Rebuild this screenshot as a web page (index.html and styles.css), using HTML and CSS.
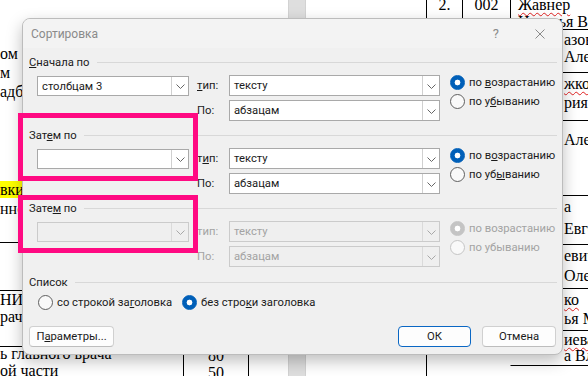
FILE: index.html
```html
<!DOCTYPE html>
<html>
<head>
    <title>Сортировка</title>
    <link rel="stylesheet" href="styles.css">
</head>
<body>
<div class="screen">
    <div class="desk">
        <div class="page page-left">
            <div class="lines lines-top">
                <p>ом</p>
                <p>м</p>
                <p>адб</p>
            </div>
            <div class="lines lines-mid">
                <p><mark>вки</mark></p>
                <p>нно</p>
            </div>
            <div class="lines lines-low">
                <p>НИЯ</p>
                <p>рач</p>
            </div>
            <div class="cells">
                <div class="cell">ь главного врача<br>ой части</div>
                <div class="cell cell-num">80<br>50</div>
                <div class="cell cell-rest"></div>
            </div>
        </div>
        <div class="page-gap"></div>
        <div class="page page-right">
            <div class="trow r0">
                <div class="c"></div>
                <div class="c c-num">2.</div>
                <div class="c c-num">002</div>
                <div class="c c-name"><span class="typo">Жавнер</span><br>Наталья В</div>
            </div>
            <div class="trow r1">
                <div class="c"></div><div class="c"></div><div class="c"></div>
                <div class="c c-name c-tail">азова<br>Алексеевна</div>
            </div>
            <div class="trow r2">
                <div class="c"></div><div class="c"></div><div class="c"></div>
                <div class="c c-name c-tail"><span class="typo">жкова</span><br>рия Андреевна</div>
            </div>
            <div class="trow r3">
                <div class="c"></div><div class="c"></div><div class="c"></div>
                <div class="c c-name c-tail">Алексеевна</div>
            </div>
            <div class="trow r4">
                <div class="c"></div><div class="c"></div><div class="c"></div>
                <div class="c c-name c-tail">а<br>Евгеньевна</div>
            </div>
            <div class="trow r5">
                <div class="c"></div><div class="c"></div><div class="c"></div>
                <div class="c c-name c-tail">евич<br>Олеговна</div>
            </div>
            <div class="trow r6">
                <div class="c"></div><div class="c"></div><div class="c"></div>
                <div class="c c-name c-tail"><span class="typo">ко</span><br>ья Михайловна</div>
            </div>
            <div class="trow r7 row-end">
                <div class="c"></div><div class="c"></div><div class="c"></div>
                <div class="c c-name c-tail"><span class="typo">иева</span><br>а Владимировна</div>
            </div>
            <div class="trow r8 row-end">
                <div class="c"></div><div class="c"></div><div class="c"></div>
                <div class="c c-name c-last"></div>
            </div>
        </div>
    </div>

    <div class="dialog">
        <div class="titlebar">
            <span class="title">Сортировка</span>
            <span class="help">?</span>
            <svg class="close" width="10" height="10" viewBox="0 0 10 10">
                <path d="M0.5 0.5 L9.5 9.5 M9.5 0.5 L0.5 9.5" stroke="#8a8a8a" stroke-width="1" fill="none"/>
            </svg>
        </div>

        <div class="dialog-body">
            <div class="group">
                <div class="group-head"><span><u>С</u>начала по</span></div>
                <div class="group-body">
                    <div class="combo key">
                        <span class="combo-text">столбцам 3</span>
                        <span class="drop"><svg width="9" height="5" viewBox="0 0 9 5"><path d="M0.5 0.5 L4.5 4.5 L8.5 0.5" fill="none" stroke="#666"/></svg></span>
                    </div>
                    <div class="fields">
                        <div class="field-row">
                            <span class="field-label"><u>т</u>ип:</span>
                            <div class="combo field">
                                <span class="combo-text">тексту</span>
                                <span class="drop"><svg width="9" height="5" viewBox="0 0 9 5"><path d="M0.5 0.5 L4.5 4.5 L8.5 0.5" fill="none" stroke="#666"/></svg></span>
                            </div>
                        </div>
                        <div class="field-row">
                            <span class="field-label">По:</span>
                            <div class="combo field">
                                <span class="combo-text">абзацам</span>
                                <span class="drop"><svg width="9" height="5" viewBox="0 0 9 5"><path d="M0.5 0.5 L4.5 4.5 L8.5 0.5" fill="none" stroke="#666"/></svg></span>
                            </div>
                        </div>
                    </div>
                    <div class="order">
                        <div class="radio checked"><span>по <u>в</u>озрастанию</span></div>
                        <div class="radio"><span>по у<u>б</u>ыванию</span></div>
                    </div>
                </div>
            </div>

            <div class="group">
                <div class="group-head"><span>Зат<u>е</u>м по</span></div>
                <div class="group-body">
                    <div class="combo key">
                        <span class="combo-text"></span>
                        <span class="drop"><svg width="9" height="5" viewBox="0 0 9 5"><path d="M0.5 0.5 L4.5 4.5 L8.5 0.5" fill="none" stroke="#666"/></svg></span>
                    </div>
                    <div class="fields">
                        <div class="field-row">
                            <span class="field-label">т<u>и</u>п:</span>
                            <div class="combo field">
                                <span class="combo-text">тексту</span>
                                <span class="drop"><svg width="9" height="5" viewBox="0 0 9 5"><path d="M0.5 0.5 L4.5 4.5 L8.5 0.5" fill="none" stroke="#666"/></svg></span>
                            </div>
                        </div>
                        <div class="field-row">
                            <span class="field-label">По:</span>
                            <div class="combo field">
                                <span class="combo-text">абзацам</span>
                                <span class="drop"><svg width="9" height="5" viewBox="0 0 9 5"><path d="M0.5 0.5 L4.5 4.5 L8.5 0.5" fill="none" stroke="#666"/></svg></span>
                            </div>
                        </div>
                    </div>
                    <div class="order">
                        <div class="radio checked"><span>по в<u>о</u>зрастанию</span></div>
                        <div class="radio"><span>по уб<u>ы</u>ванию</span></div>
                    </div>
                </div>
            </div>

            <div class="group group-off">
                <div class="group-head"><span>Зате<u>м</u> по</span></div>
                <div class="group-body">
                    <div class="combo key">
                        <span class="combo-text"></span>
                        <span class="drop"><svg width="9" height="5" viewBox="0 0 9 5"><path d="M0.5 0.5 L4.5 4.5 L8.5 0.5" fill="none" stroke="#a8a8a8"/></svg></span>
                    </div>
                    <div class="fields">
                        <div class="field-row">
                            <span class="field-label">тип:</span>
                            <div class="combo field">
                                <span class="combo-text">тексту</span>
                                <span class="drop"><svg width="9" height="5" viewBox="0 0 9 5"><path d="M0.5 0.5 L4.5 4.5 L8.5 0.5" fill="none" stroke="#a8a8a8"/></svg></span>
                            </div>
                        </div>
                        <div class="field-row">
                            <span class="field-label">По:</span>
                            <div class="combo field">
                                <span class="combo-text">абзацам</span>
                                <span class="drop"><svg width="9" height="5" viewBox="0 0 9 5"><path d="M0.5 0.5 L4.5 4.5 L8.5 0.5" fill="none" stroke="#a8a8a8"/></svg></span>
                            </div>
                        </div>
                    </div>
                    <div class="order">
                        <div class="radio checked"><span>по возрастанию</span></div>
                        <div class="radio"><span>по убыванию</span></div>
                    </div>
                </div>
            </div>

            <div class="group-head list-head"><span>Список</span></div>
            <div class="list-row">
                <div class="radio"><span>со строкой за<u>г</u>оловка</span></div>
                <div class="radio checked"><span>без стро<u>к</u>и заголовка</span></div>
            </div>

            <div class="footer">
                <button class="btn btn-params">П<u>а</u>раметры...</button>
                <button class="btn btn-ok">ОК</button>
                <button class="btn btn-cancel">Отмена</button>
            </div>
        </div>
    </div>

    <div class="mark mark-first"></div>
    <div class="mark mark-second"></div>
</div>
</body>
</html>
```

FILE: styles.css
```css
* {
    box-sizing: border-box;
}

body {
    margin: 0;
    background-color: #ffffff;
    font-family: "Liberation Serif", "Times New Roman", serif;
}

.screen {
    position: relative;
    width: 588px;
    height: 376px;
    overflow: hidden;
    background-color: #ffffff;
}

/* document behind the dialog */

.desk {
    display: flex;
    height: 376px;
    font-size: 16px;
    color: #000000;
}

.page-left {
    width: 288px;
}

.page-gap {
    width: 18px;
    background-color: #dedede;
    border-left: 1px solid #d2d2d2;
    border-right: 1px solid #d2d2d2;
}

.page-right {
    flex: 1;
}

.lines p {
    margin: 0;
    line-height: 19px;
    white-space: nowrap;
}

.lines-top {
    padding-top: 44px;
}

.lines-mid {
    margin-top: 79px;
    height: 63px;
    border-bottom: 1px solid #000000;
}

mark {
    background-color: #ffff00;
    color: #000000;
}

.lines-low {
    margin-top: 47px;
    height: 57px;
    border-top: 1px solid #000000;
    border-bottom: 1px solid #000000;
}

.lines-low p {
    line-height: 17px;
}

.cells {
    display: grid;
    grid-template-columns: 183px 65px 40px;
    line-height: 17px;
    height: 40px;
}

.cell {
    white-space: nowrap;
    margin-top: -2px;
}

.cell-num {
    text-align: center;
    border-left: 1px solid #000000;
    margin-top: 0;
}

.cell-rest {
    border-left: 1px solid #000000;
    margin-top: 0;
}

.trow {
    display: grid;
    grid-template-columns: 120px 36px 48px 1fr;
}

.c {
    border-left: 1px solid #000000;
    white-space: nowrap;
}

.c:first-child {
    border-left: none;
}

.c-num {
    text-align: center;
    line-height: 17px;
}

.c-name {
    padding-left: 7px;
    border-bottom: 1px solid #000000;
    overflow: hidden;
}

.c-tail {
    padding-left: 53px;
}

.typo {
    text-decoration: underline wavy #e02020;
    text-decoration-thickness: 1px;
    text-underline-offset: 2px;
}

.r0 { height: 34px; margin-top: -4px; }
.r0 .c-name { line-height: 17px; }
.r1 { height: 43px; }
.r1 .c-name { line-height: 17px; padding-top: 1px; }
.r2 { height: 48px; }
.r2 .c-name { line-height: 19px; padding-top: 1px; }
.r3 { height: 75px; }
.r3 .c-name { line-height: 19px; padding-top: 9px; }
.r4 { height: 49px; }
.r4 .c-name { line-height: 22px; }
.r5 { height: 44px; }
.r5 .c-name { line-height: 20px; padding-top: 1px; }
.r6 { height: 42px; }
.r6 .c-name { line-height: 19px; padding-top: 1px; }
.r7 { height: 35px; }
.r7 .c-name { line-height: 16px; padding-top: 1px; }
.r8 { height: 30px; }

.row-end .c:nth-child(3),
.row-end .c:nth-child(4) {
    border-left-color: transparent;
}

.c-last {
    border-bottom: none;
}

/* dialog */

.dialog {
    position: absolute;
    left: 22px;
    top: 18px;
    width: 541px;
    height: 337px;
    display: flex;
    flex-direction: column;
    background-color: #f0f0f0;
    border: 1px solid #bcbcbc;
    border-radius: 8px;
    box-shadow: 0 6px 16px rgba(0, 0, 0, 0.26);
    overflow: hidden;
    font-family: Roboto, "Liberation Sans", sans-serif;
    font-size: 11.25px;
    color: #1b1b1b;
}

.titlebar {
    height: 29px;
    display: flex;
    align-items: center;
    padding-left: 8px;
    background-color: #f3f3f3;
    font-size: 12px;
}

.title {
    flex: 1;
    color: #8a8a8a;
}

.help {
    margin-right: 36px;
    font-size: 13px;
    color: #8a8a8a;
}

.close {
    margin-right: 17px;
}

.dialog-body {
    flex: 1;
    display: flex;
    flex-direction: column;
    padding: 6px 5px 7px 6px;
}

.group {
    margin-bottom: 6px;
}

.group-head {
    height: 16px;
    display: flex;
    align-items: center;
    margin-bottom: 5px;
}

.group-head::after {
    content: "";
    flex: 1;
    height: 1px;
    margin-left: 7px;
    background-color: #d8d8d8;
}

.group-body {
    display: flex;
    align-items: flex-start;
}

.combo {
    display: flex;
    align-items: stretch;
    background-color: #ffffff;
    border: 1px solid #a9a9a9;
}

.combo-text {
    flex: 1;
    padding-left: 4px;
    display: flex;
    align-items: center;
    white-space: nowrap;
}

.drop {
    width: 17px;
    display: flex;
    align-items: center;
    justify-content: center;
    border-left: 1px solid #d0d0d0;
    padding-top: 1px;
}

.key {
    flex-shrink: 0;
    width: 152px;
    height: 20px;
    margin: 1px 0 0 8px;
}

.fields {
    flex-shrink: 0;
    margin-left: 8px;
}

.field-row {
    display: flex;
    align-items: center;
}

.field-row + .field-row {
    margin-top: 4px;
}

.field-label {
    width: 32px;
}

.field {
    width: 211px;
    height: 21px;
}

.order {
    flex-shrink: 0;
    margin: -2px 0 0 10px;
}

.radio {
    height: 19px;
    display: flex;
    align-items: center;
    white-space: nowrap;
}

.radio::before {
    content: "";
    flex-shrink: 0;
    width: 13px;
    height: 13px;
    margin-right: 4px;
    border: 1px solid #5f5f5f;
    border-radius: 50%;
    background-color: #f9f9f9;
}

.radio.checked::before {
    border-color: #005fb8;
    background: radial-gradient(circle, #ffffff 0 2.6px, #005fb8 3.2px);
}

.group-off .group-body {
    color: #a3a3a3;
}

.group-off .combo {
    background-color: #efefef;
    border-color: #cbcbcb;
}

.group-off .drop {
    border-left-color: #dadada;
}

.group-off .radio::before {
    border-color: #c4c4c4;
}

.group-off .radio.checked::before {
    border-color: #c4c4c4;
    background: radial-gradient(circle, #ffffff 0 2.6px, #c4c4c4 3.2px);
}

.list-head {
    margin-top: 1px;
    margin-bottom: 4px;
}

.list-row {
    display: flex;
    height: 16px;
    align-items: center;
    padding-left: 9px;
}

.list-row .radio:first-child {
    width: 144px;
}

.footer {
    margin-top: auto;
    display: flex;
}

.btn {
    height: 21px;
    padding: 0;
    font-family: Roboto, "Liberation Sans", sans-serif;
    font-size: 11.25px;
    color: #1b1b1b;
    background-color: #fdfdfd;
    border: 1px solid #d0d0d0;
    border-bottom-color: #bdbdbd;
    border-radius: 4px;
}

.btn-params {
    width: 85px;
}

.btn-ok {
    width: 73px;
    margin-left: auto;
    border-color: #0a67c4;
}

.btn-cancel {
    width: 74px;
    margin: 0 1px 0 11px;
}

/* pink marks drawn over the screenshot */

.mark {
    position: absolute;
    left: 18px;
    width: 180px;
    border: 5px solid #ff0a82;
}

.mark-first {
    top: 113px;
    height: 68px;
}

.mark-second {
    top: 195px;
    height: 58px;
}
```
